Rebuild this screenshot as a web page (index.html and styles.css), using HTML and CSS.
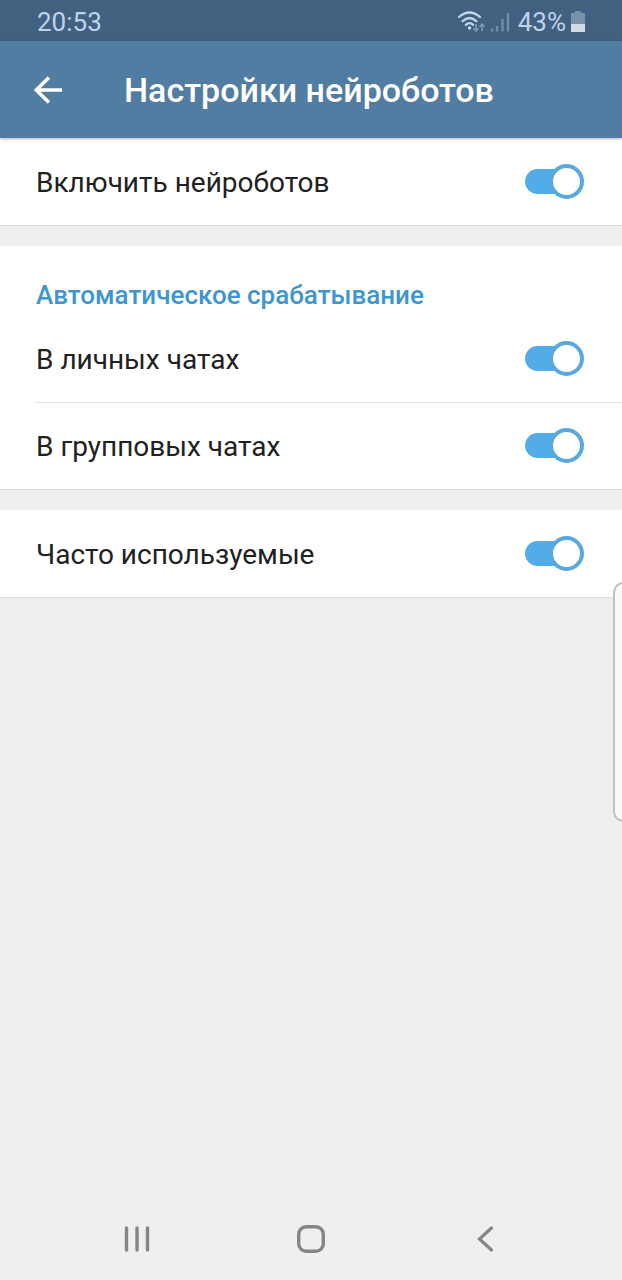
FILE: index.html
```html
<!DOCTYPE html>
<html lang="ru">
<head>
<meta charset="utf-8">
<meta name="viewport" content="width=device-width, initial-scale=1">
<title>Настройки нейроботов</title>
<link rel="stylesheet" href="styles.css">
</head>
<body>
<div class="status-bar">
  <time class="status-time">20:53</time>
  <div class="status-icons">
    <svg class="wifi" viewBox="0 0 28 22" width="28" height="22" aria-hidden="true">
      <g fill="none" stroke="#c3d8ec" stroke-width="2.2" stroke-linecap="round">
        <path d="M2 6Q12.500 -3 23 6"/>
        <path d="M5.500 10.200Q12.500 3.800 19.500 10.200"/>
        <path d="M8.800 13.800Q12.500 10.600 16.200 13.800"/>
      </g>
      <circle cx="12.500" cy="17" r="1.800" fill="#c3d8ec"/>
      <g fill="none" stroke="#7e9cb8" stroke-width="1.6">
        <path d="M19 13v7M16.6 17.3L19 19.8l2.4-2.5"/>
        <path d="M25 20v-7M22.6 15.7L25 13.2l2.4 2.5"/>
      </g>
    </svg>
    <svg class="signal" viewBox="0 0 20 20" width="20" height="20" aria-hidden="true">
      <path d="M2 16.500v3M7 14v5.500M12.500 7v12.500M18 1v18.500" fill="none" stroke="#718da8" stroke-width="2.400"/>
    </svg>
    <span class="battery-level">43%</span>
    <svg class="battery" viewBox="0 0 14 22" width="14" height="22" aria-hidden="true">
      <path d="M4 0h6v2h4v11H0V2h4z" fill="#7890a8"/>
      <path d="M0 13h14v8H0z" fill="#d0dbe6"/>
    </svg>
  </div>
</div>
<header class="app-bar">
  <button class="back" type="button" aria-label="Назад">
    <svg viewBox="0 0 28 28" width="28" height="28" aria-hidden="true">
      <path d="M28 14H2M15 1.500L2.200 14 15 26.500" fill="none" stroke="#fff" stroke-width="3.600"/>
    </svg>
  </button>
  <h1 class="title">Настройки нейроботов</h1>
</header>
<main class="settings">
  <section class="group">
    <label class="row"><span>Включить нейроботов</span><input class="switch" type="checkbox" role="switch" checked></label>
  </section>
  <section class="group">
    <h2 class="group-title">Автоматическое срабатывание</h2>
    <label class="row"><span>В личных чатах</span><input class="switch" type="checkbox" role="switch" checked></label>
    <label class="row"><span>В групповых чатах</span><input class="switch" type="checkbox" role="switch" checked></label>
  </section>
  <section class="group">
    <label class="row"><span>Часто используемые</span><input class="switch" type="checkbox" role="switch" checked></label>
  </section>
</main>
<div class="edge-handle"></div>
<nav class="nav-bar">
  <button class="nav-button" type="button" aria-label="Недавние">
    <svg viewBox="0 0 28 28" width="28" height="28" aria-hidden="true"><path d="M3.500 3v22M14 3v22M24.500 3v22" fill="none" stroke="#858585" stroke-width="3.400" stroke-linecap="round"/></svg>
  </button>
  <button class="nav-button" type="button" aria-label="Домой">
    <svg viewBox="0 0 28 28" width="28" height="28" aria-hidden="true"><rect x="1.700" y="1.700" width="24.600" height="24.600" rx="7.500" fill="none" stroke="#858585" stroke-width="3.400"/></svg>
  </button>
  <button class="nav-button" type="button" aria-label="Назад">
    <svg viewBox="0 0 28 28" width="28" height="28" aria-hidden="true"><path d="M20.500 3L8.500 14 20.500 25" fill="none" stroke="#858585" stroke-width="3.200" stroke-linecap="round"/></svg>
  </button>
</nav>
</body>
</html>
```
FILE: styles.css
```css
*,
*::before,
*::after {
  box-sizing: border-box;
}

body {
  display: flex;
  flex-direction: column;
  min-height: 100vh;
  margin: 0;
  background: #efefef;
  color: #212121;
  font-family: Roboto, "Noto Sans", sans-serif;
}

button {
  display: flex;
  align-items: center;
  justify-content: center;
  padding: 0;
  border: 0;
  background: none;
}

.status-bar {
  display: flex;
  align-items: center;
  justify-content: space-between;
  height: 41px;
  padding: 2px 37px 0;
  background: #426180;
  color: #bdd3eb;
  font-size: 26px;
}

.status-icons {
  display: flex;
  align-items: center;
  gap: 5px;
}

.battery-level {
  margin-left: 3px;
}

.app-bar {
  display: flex;
  align-items: center;
  gap: 62px;
  height: 97px;
  padding: 0 34px;
  background: #517da2;
  box-shadow: 0 1px 3px rgba(0, 0, 0, 0.3);
  color: #fff;
}

.title {
  margin: 0;
  font-size: 34px;
  font-weight: 500;
}

.settings {
  display: flex;
  flex: 1;
  flex-direction: column;
  gap: 21px;
}

.group {
  background: #fff;
  box-shadow: 0 1px 1px rgba(0, 0, 0, 0.08);
}

.app-bar,
.edge-handle {
  position: relative;
  z-index: 1;
}

.group-title {
  margin: 0;
  padding: 33px 36px 4px;
  color: #3e95d0;
  font-size: 26px;
  font-weight: 500;
  line-height: 32px;
}

.row {
  display: flex;
  align-items: center;
  justify-content: space-between;
  height: 87px;
  padding: 2px 38px 0 36px;
  font-size: 28px;
}

.row + .row {
  background: linear-gradient(#e4e4e4, #e4e4e4) 35px 0 / 100% 1px no-repeat;
}

.switch {
  display: grid;
  align-items: center;
  width: 59px;
  height: 35px;
  margin: 0 0 3px;
  appearance: none;
}

.switch::before,
.switch::after {
  grid-area: 1 / 1;
  content: "";
}

.switch::before {
  width: 50px;
  height: 25px;
  border-radius: 13px;
  background: #b0b0b0;
}

.switch::after {
  width: 35px;
  height: 35px;
  border: 4px solid #b0b0b0;
  border-radius: 50%;
  background: #fff;
}

.switch:checked::before {
  background: #52ace7;
}

.switch:checked::after {
  justify-self: end;
  border-color: #58a9de;
}

.edge-handle {
  position: fixed;
  top: 582px;
  right: -12px;
  width: 21px;
  height: 240px;
  border: 2px solid #c0c0c0;
  border-radius: 11px;
  background: #fafafa;
}

.nav-bar {
  display: flex;
  height: 83px;
  padding: 0 8%;
}

.nav-button {
  flex: 1;
}
```
